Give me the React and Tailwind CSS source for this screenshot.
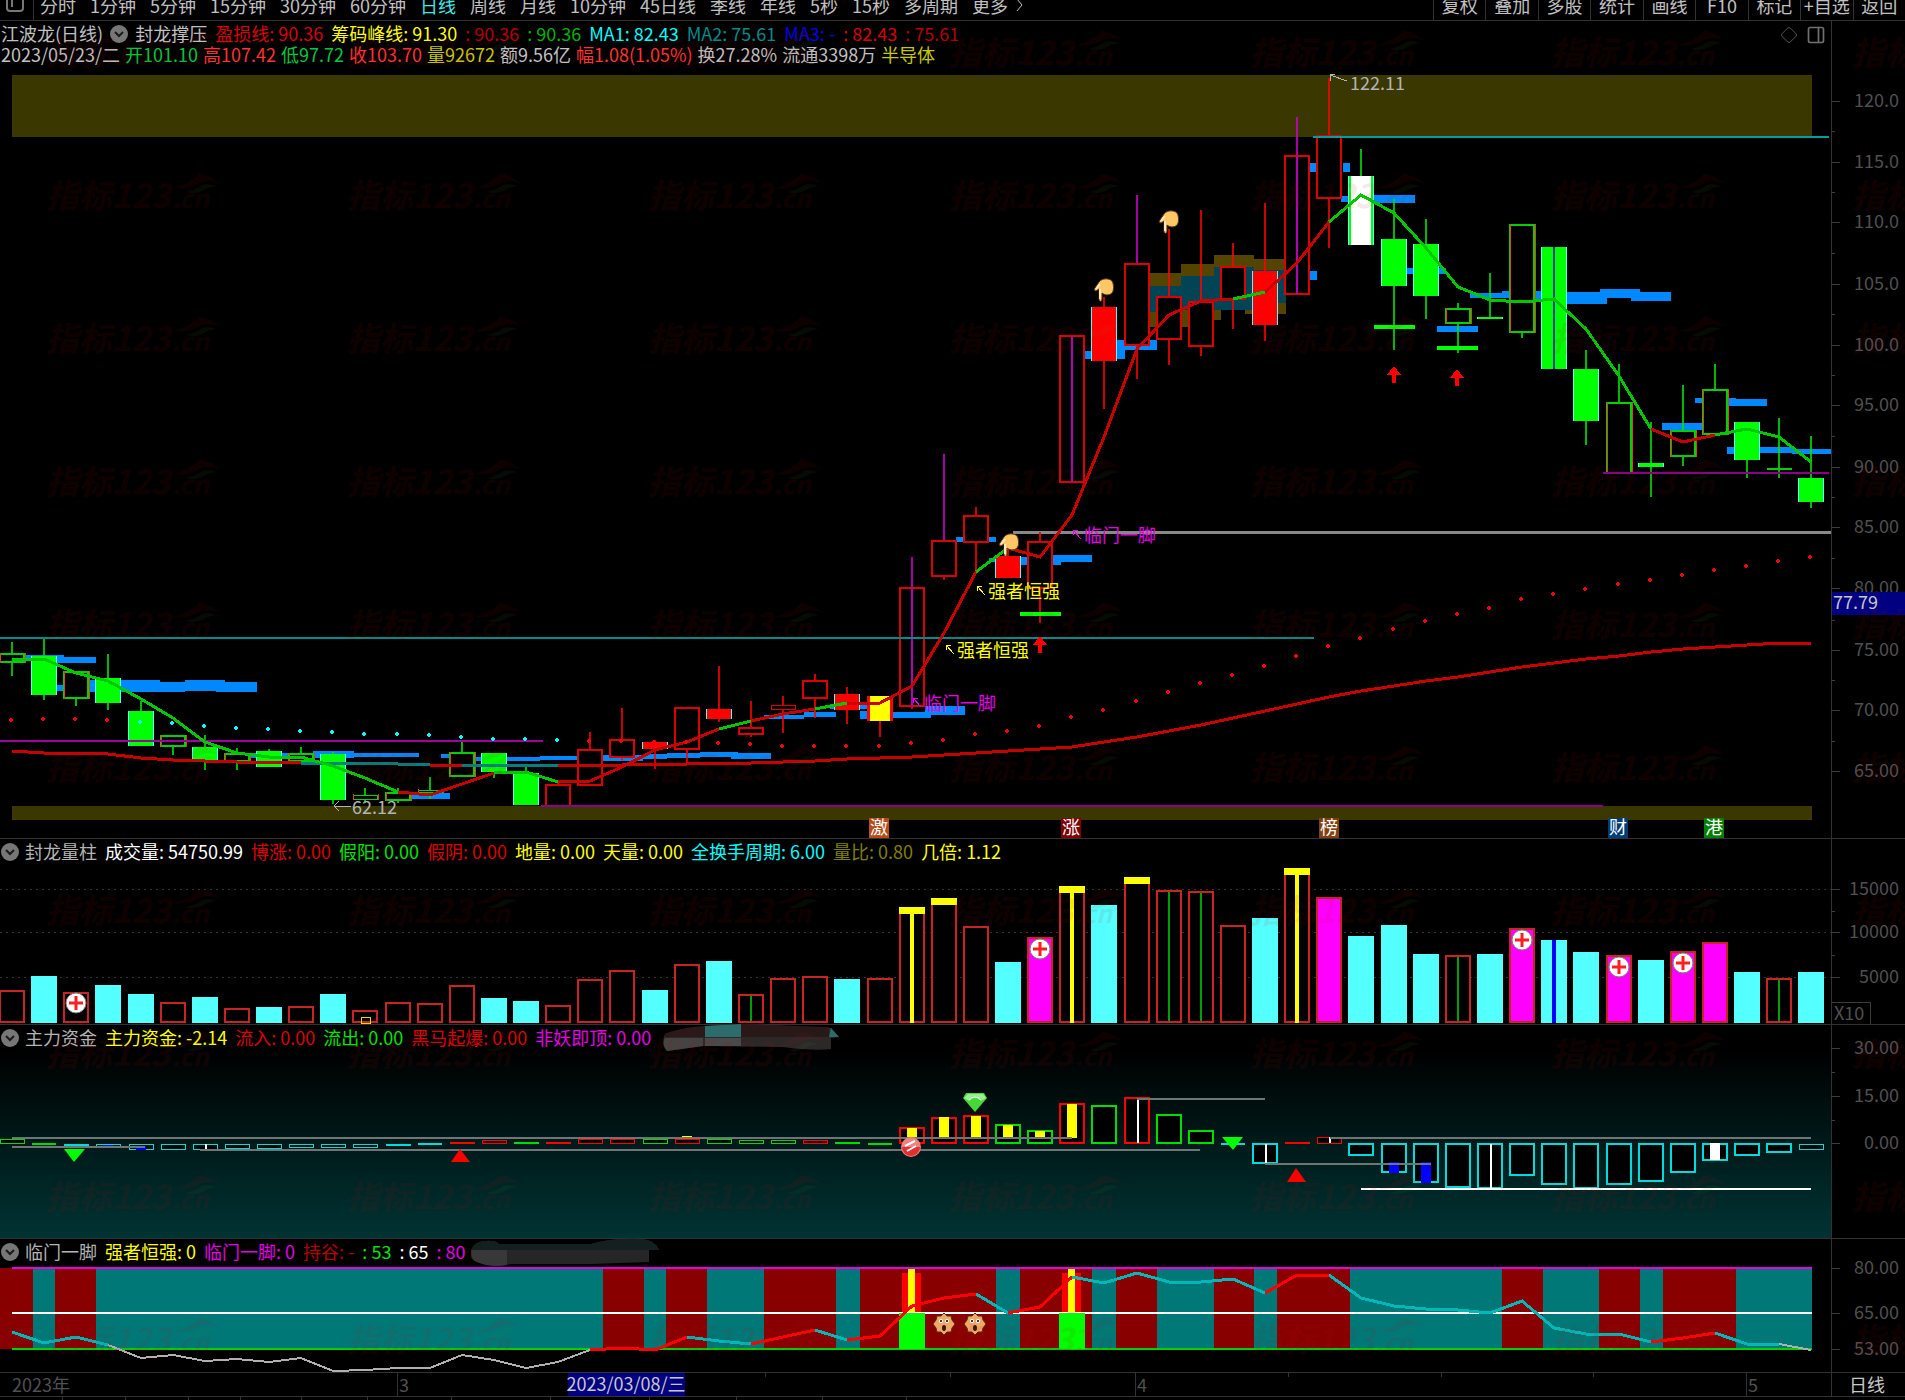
import { Diamond, PanelRight } from 'lucide-react';

// All charts share one coordinate space: 1905 wide, y measured from the top of the window.
const W = 1905;
const AXIS_X = 1831;
const cx = (i) => Math.round(12 + i * 32.13);

const periods = ['分时', '1分钟', '5分钟', '15分钟', '30分钟', '60分钟', '日线', '周线', '月线', '10分钟', '45日线', '季线', '年线', '5秒', '15秒', '多周期', '更多'];
const tools = ['复权', '叠加', '多股', '统计', '画线', 'F10', '标记', '+自选', '返回'];

// [high, body top, body bottom, low, kind]
const candles = [
  [642, 654, 662, 676, 'h'], [638, 656, 695, 700, 'G'], [672, 672, 698, 706, 'h'], [654, 678, 703, 710, 'G'],
  [701, 711, 746, 746, 'G'], [736, 736, 746, 755, 'h'], [735, 747, 761, 770, 'G'], [748, 754, 761, 770, 'h'],
  [749, 751, 767, 767, 'G'], [747, 754, 761, 761, 'h'], [752, 754, 800, 804, 'G'], [788, 795, 799, 803, 'h'],
  [788, 793, 800, 803, 'h'], [777, 790, 792, 799, 'h'], [742, 753, 776, 776, 'h'], [753, 753, 772, 778, 'G'],
  [767, 773, 805, 805, 'G'], [782, 785, 806, 806, 'r'], [732, 750, 785, 785, 'r'], [708, 740, 757, 760, 'r'],
  [740, 742, 749, 769, 'R'], [708, 708, 749, 763, 'r'], [666, 709, 719, 722, 'R'], [701, 728, 734, 737, 'r'],
  [696, 705, 709, 733, 'r'], [674, 681, 698, 718, 'r'], [687, 694, 710, 724, 'R'], [696, 696, 721, 737, 'Y'],
  [557, 588, 706, 709, 'm'], [454, 541, 576, 580, 'M'], [507, 516, 542, 572, 'r'], [548, 556, 578, 578, 'R'],
  [532, 542, 588, 623, 'r'], [336, 336, 482, 482, 'm'], [297, 307, 361, 409, 'R'], [195, 264, 345, 379, 'M'],
  [229, 297, 339, 365, 'r'], [210, 302, 346, 356, 'r'], [243, 267, 299, 329, 'r'], [203, 271, 325, 341, 'R'],
  [117, 156, 294, 294, 'm'], [78, 136, 198, 248, 'r'], [149, 176, 245, 245, 'W'], [199, 239, 286, 350, 'G'],
  [219, 244, 296, 319, 'G'], [303, 309, 323, 353, 'h'], [273, 317, 319, 319, 'G'], [225, 225, 332, 338, 'h'],
  [247, 247, 369, 369, 'B'], [350, 369, 421, 445, 'G'], [364, 403, 473, 473, 'h'], [422, 463, 467, 497, 'G'],
  [385, 431, 456, 466, 'h'], [364, 390, 434, 434, 'h'], [422, 422, 460, 478, 'G'], [418, 468, 468, 478, 'h'],
  [436, 478, 502, 508, 'G'],
];

// cost bands, [x1, y1, x2, y2]
const blueBands = [
  [25, 655, 64, 658], [32, 657, 96, 663], [57, 685, 64, 691], [88, 680, 160, 692], [160, 682, 185, 692], [185, 680, 225, 691],
  [216, 682, 257, 692], [248, 753, 285, 758], [285, 753, 313, 757], [313, 751, 354, 758], [354, 753, 419, 757], [408, 793, 450, 799],
  [441, 754, 450, 758], [474, 757, 540, 761], [540, 756, 578, 760], [603, 755, 643, 761], [643, 754, 667, 759],
  [667, 753, 700, 758], [700, 752, 738, 757], [731, 753, 771, 759], [764, 715, 804, 719], [804, 712, 836, 717],
  [830, 704, 870, 709], [860, 711, 868, 719], [893, 712, 931, 718], [925, 706, 965, 715], [956, 537, 964, 542],
  [988, 537, 996, 542], [989, 558, 997, 562], [1021, 557, 1028, 565], [1053, 555, 1092, 562], [1053, 562, 1061, 565],
  [1084, 351, 1092, 359], [1117, 340, 1125, 359], [1125, 345, 1157, 350], [1149, 340, 1157, 345], [1310, 163, 1317, 172],
  [1310, 271, 1317, 280], [1343, 163, 1350, 172], [1341, 196, 1351, 202], [1374, 195, 1415, 203], [1407, 268, 1415, 274],
  [1438, 268, 1446, 274], [1437, 326, 1478, 332], [1470, 293, 1502, 298], [1502, 291, 1510, 298], [1535, 291, 1543, 299],
  [1567, 292, 1607, 304], [1600, 289, 1640, 298], [1631, 292, 1671, 301], [1662, 423, 1703, 430], [1695, 398, 1703, 403],
  [1728, 398, 1736, 404], [1728, 399, 1767, 406], [1727, 447, 1735, 454], [1760, 447, 1792, 453], [1792, 449, 1831, 454],
];
const oliveZone = [[1149, 273, 1181, 327], [1181, 264, 1214, 327], [1214, 255, 1254, 267], [1214, 310, 1221, 320], [1245, 310, 1254, 314], [1254, 259, 1286, 314]];
const tealZone = [[1149, 286, 1181, 312], [1181, 276, 1214, 310], [1214, 267, 1254, 310], [1254, 270, 1286, 303]];

const maShort = [659, 659, 673, 681, 699, 718, 742, 753, 757, 757, 766, 778, 792, 795, 784, 773, 772, 782, 781, 767, 750, 742, 729, 721, 714, 709, 703, 703, 686, 633, 572, 548, 557, 515, 437, 349, 315, 301, 299, 292, 263, 222, 195, 213, 248, 287, 300, 302, 299, 329, 376, 429, 442, 435, 429, 437, 462];
const maShortRuns = [[0, 12, 'g'], [12, 15, 'r'], [15, 17, 'g'], [17, 22, 'r'], [22, 23, 'g'], [23, 25, 'r'], [25, 26, 'g'], [26, 30, 'r'], [30, 31, 'g'], [31, 38, 'r'], [38, 39, 'g'], [39, 41, 'r'], [41, 51, 'g'], [51, 53, 'r'], [53, 56, 'g']];
const maLong = [751, 753, 753, 754, 758, 760, 761, 762, 762, 763, 763, 763, 764, 765, 765, 765, 765, 765, 765, 765, 764, 764, 763, 763, 762, 761, 759, 758, 757, 755, 753, 751, 749, 747, 742, 737, 731, 725, 718, 711, 704, 697, 691, 686, 681, 677, 672, 667, 663, 659, 656, 652, 649, 647, 645, 643, 643];
const maLongRuns = [[0, 9, 'r'], [9, 13, 't'], [13, 14, 'r'], [14, 17, 't'], [17, 56, 'r']];
const dots = [720, 719, 719, 720, 722, 723, 726, 728, 729, 731, 732, 734, 734, 735, 737, 739, 739, 740, 741, 741, 742, 742, 743, 744, 746, 746, 746, 746, 743, 740, 734, 731, 726, 717, 710, 701, 692, 683, 675, 666, 656, 646, 638, 629, 621, 614, 608, 599, 594, 589, 584, 580, 575, 570, 566, 561, 557];

// r hollow red, c cyan, g hollow red with green line, y capped with centre line, k capped, m magenta, b cyan with blue line
const volume = [
  [990, 'r'], [976, 'c'], [992, 'r'], [985, 'c'], [994, 'c'], [1002, 'r'], [997, 'c'], [1008, 'r'], [1007, 'c'], [1006, 'r'],
  [994, 'c'], [1010, 'r'], [1002, 'r'], [1003, 'r'], [985, 'r'], [998, 'c'], [1001, 'c'], [1005, 'r'], [979, 'r'], [970, 'r'],
  [990, 'c'], [964, 'r'], [961, 'c'], [994, 'g'], [978, 'r'], [976, 'r'], [979, 'c'], [978, 'r'], [907, 'y'], [898, 'k'],
  [926, 'r'], [962, 'c'], [937, 'm'], [886, 'y'], [905, 'c'], [877, 'k'], [890, 'g'], [891, 'g'], [925, 'r'], [918, 'c'],
  [868, 'y'], [897, 'm'], [936, 'c'], [925, 'c'], [954, 'c'], [955, 'g'], [954, 'c'], [928, 'm'], [940, 'b'], [952, 'c'],
  [955, 'm'], [960, 'c'], [951, 'm'], [942, 'm'], [972, 'c'], [978, 'g'], [972, 'c'],
];
const crosses = [[2, 1003], [32, 949], [47, 940], [50, 967], [52, 963]];

// [top, bottom, colour, inner mark]
const flow = [
  [1139, 1143, 'g'], [1143, 1143, 'g'], [1144, 1145, 'c'], [1144, 1146, 'c', 'b', 1145, 1148], [1144, 1149, 'c', 'b', 1146, 1150], [1144, 1149, 'c'],
  [1144, 1149, 'c', 'w'], [1144, 1148, 'c'], [1144, 1148, 'c'], [1144, 1147, 'c'], [1144, 1147, 'c'], [1144, 1147, 'c'],
  [1144, 1145, 'c'], [1143, 1143, 'c'], [1142, 1143, 'r'], [1140, 1143, 'r'], [1142, 1143, 'g'], [1142, 1143, 'r'],
  [1139, 1143, 'r'], [1139, 1143, 'r'], [1139, 1143, 'g'], [1139, 1143, 'r', 'y', 1136, 1138], [1139, 1143, 'g'], [1140, 1143, 'g'],
  [1140, 1143, 'g'], [1140, 1143, 'r'], [1142, 1143, 'g'], [1143, 1143, 'g'], [1128, 1143, 'r', 'y', 1128, 1138],
  [1118, 1143, 'r', 'y', 1117, 1138], [1116, 1143, 'r', 'y', 1116, 1138], [1125, 1143, 'g', 'y', 1125, 1138],
  [1131, 1143, 'g', 'y', 1131, 1138], [1104, 1143, 'r', 'y', 1104, 1138], [1106, 1143, 'g'], [1098, 1143, 'r', 'w'],
  [1115, 1143, 'g'], [1131, 1143, 'g'], [1143, 1143, 'c'], [1144, 1163, 'c', 'w'], [1142, 1143, 'r'], [1137, 1143, 'r', 'w'],
  [1144, 1155, 'c'], [1144, 1172, 'c', 'b', 1162, 1173], [1144, 1182, 'c', 'b', 1162, 1183], [1144, 1187, 'c'],
  [1144, 1188, 'c', 'w'], [1144, 1175, 'c'], [1144, 1184, 'c'], [1144, 1188, 'c'], [1144, 1184, 'c'], [1144, 1181, 'c'],
  [1144, 1172, 'c'], [1144, 1160, 'c', 'W', 1143, 1160], [1144, 1155, 'c'], [1144, 1152, 'c'], [1144, 1149, 'c'],
];

const redZones = [[0, 33], [55, 96], [603, 644], [666, 707], [764, 836], [860, 996], [1020, 1092], [1116, 1157], [1214, 1254], [1277, 1350], [1502, 1543], [1599, 1640], [1663, 1736]];
const kick = [1332, 1343, 1337, 1345, 1358, 1355, 1361, 1359, 1362, 1358, 1371, 1370, 1368, 1368, 1355, 1360, 1368, 1362, 1350, 1348, 1350, 1337, 1341, 1344, 1337, 1330, 1340, 1336, 1306, 1298, 1294, 1313, 1307, 1277, 1283, 1273, 1282, 1282, 1279, 1293, 1275, 1275, 1298, 1306, 1309, 1310, 1313, 1301, 1328, 1334, 1334, 1342, 1338, 1333, 1344, 1344, 1350];
const kickRuns = [[0, 3, 'c'], [3, 18, 'w'], [18, 21, 'R'], [21, 23, 'c'], [23, 25, 'R'], [25, 26, 'c'], [26, 30, 'R'], [30, 31, 'c'], [31, 33, 'R'], [33, 39, 'c'], [39, 41, 'R'], [41, 51, 'c'], [51, 53, 'R'], [53, 55, 'c'], [55, 56, 'w']];

const runColor = { g: '#00c800', r: '#c80000', t: '#008080', c: '#00b8b8', w: '#b0b0b0', R: '#ff0000' };
const flowColor = { g: '#00dc00', r: '#ff0000', c: '#00dcdc' };

const Rects = ({ list, fill }) => list.map(([x1, y1, x2, y2], k) => <rect key={k} x={x1} y={y1} width={x2 - x1} height={y2 - y1} fill={fill} />);

const Runs = ({ values, runs }) => runs.map(([a, b, c]) => (
  <polyline key={a} fill="none" stroke={runColor[c]} strokeWidth={c === 'w' ? 2 : 3}
    points={values.slice(a, b + 1).map((y, k) => `${cx(a + k)},${y}`).join(' ')} />
));

const Candle = ({ i, data: [high, top, bottom, low, kind] }) => {
  const x = cx(i);
  const red = 'rRmMY'.includes(kind);
  const line = red ? '#ff0000' : '#00e600';
  const solid = { G: '#00ff00', B: '#00ff00', R: '#ff0000', Y: '#ffff00', W: '#ffffff' }[kind];
  const h = Math.max(bottom - top, 1);
  return (
    <g>
      <rect x={x - 1} y={high} width={2} height={top - high} fill={'mM'.includes(kind) ? '#d000d0' : line} opacity={0.8} />
      <rect x={x - 1} y={bottom} width={2} height={low - bottom} fill={line} opacity={0.8} />
      {solid ? (
        <>
          <rect x={x - 13} y={top} width={26} height={h} fill={kind === 'Y' ? '#ff0000' : '#54ffff'} />
          <rect x={kind === 'Y' ? x - 10 : x - 12} y={top} width={kind === 'Y' ? 20 : 24} height={h} fill={kind === 'W' ? '#00ff00' : solid} />
          {kind === 'W' && <rect x={x - 10} y={top} width={20} height={h} fill="#ffffff" />}
          {kind === 'B' && <rect x={x - 1} y={top} width={2} height={h} fill="#0040a0" />}
        </>
      ) : (
        <>
          <rect x={x - 12} y={top} width={24} height={h} fill="#000" stroke={red ? '#dc0000' : '#00d200'} strokeWidth={h > 4 ? 2 : 1} />
          {!red && h > 1 && <path d={`M${x - 12} ${top - 1}V${bottom + 1}M${x + 13} ${top - 1}V${bottom + 1}`} stroke="#e04020" />}
        </>
      )}
      {kind === 'm' && <rect x={x - 1} y={top} width={2} height={h} fill="#b400b4" />}
    </g>
  );
};

const Hand = ({ x, y }) => (
  <g transform={`translate(${x} ${y})`} shapeRendering="auto">
    <path d="M5 3C8-1 15-1 18 2C20 5 20 12 18 14C15 17 10 16 8 14V20C8 23 5 23 5 20V10L2 12C0 12 0 10 1 9Z" fill="#ffc864" stroke="#5a3418" strokeWidth={1} />
    <path d="M2 10L6 5M6 10V20" stroke="#ffe6c0" strokeWidth={2} fill="none" />
  </g>
);

const UpArrow = ({ x, y }) => <path d={`M${x} ${y}l7 9h-5v8h-4v-8h-5z`} fill="#ff0000" />;

const Note = ({ x, y, color, children }) => (
  <g>
    <path d={`M${x - 3} ${y + 4}l-8 -9m0 5v-5h5`} stroke={color} fill="none" strokeWidth={1} />
    <text x={x} y={y + 7} fill={color} fontSize={18}>{children}</text>
  </g>
);

const Tag = ({ x, fill, children }) => (
  <g>
    <rect x={x} y={818} width={20} height={20} fill={fill} />
    <text x={x + 10} y={834} fill="#fff" fontSize={18} textAnchor="middle">{children}</text>
  </g>
);

const Face = ({ x, y }) => (
  <g transform={`translate(${x} ${y})`} shapeRendering="auto">
    <path d="M0-11L3-8L7-8L8-4L11 0L8 4L7 8L3 8L0 11L-3 8L-7 8L-8 4L-11 0L-8-4L-7-8L-3-8Z" fill="#f0a868" stroke="#5a2c08" />
    <circle cx={-3} cy={-3} r={2} fill="#fff" /><circle cx={3} cy={-3} r={2} fill="#fff" />
    <circle cx={-3} cy={-3} r={1} fill="#000" /><circle cx={3} cy={-3} r={1} fill="#000" />
    <ellipse cx={0} cy={4} rx={2} ry={3} fill="#3c1400" />
  </g>
);

const Axis = ({ top, height, labels, minor = [] }) => (
  <g>
    <rect x={AXIS_X} y={top} width={1} height={height} fill="#323232" />
    {minor.map((y) => <rect key={y} x={AXIS_X} y={y} width={4} height={1} fill="#3c3c3c" />)}
    {labels.map(([y, label]) => (
      <g key={y}>
        <rect x={AXIS_X} y={y} width={9} height={1} fill="#3c3c3c" />
        <text x={1899} y={y + 6} textAnchor="end" fontSize={18} fill="#505050">{label}</text>
      </g>
    ))}
  </g>
);

const Chart = ({ top, height, label, children }) => (
  <svg className="block h-auto w-full overflow-visible" viewBox={`0 ${top} ${W} ${height}`} shapeRendering="crispEdges" role="img" aria-label={label}>
    {children}
  </svg>
);

const Toggle = ({ name }) => (
  <button type="button" aria-label={`${name} 菜单`} className="flex size-[18px] shrink-0 items-center justify-center rounded-full bg-[#777777]">
    <svg viewBox="0 0 18 18" className="size-[18px]"><path d="M5 7l4 4 4-4" fill="none" stroke="#1a1a1a" strokeWidth="2" /></svg>
  </button>
);

const PanelHeader = ({ name, items }) => (
  <div className="grid grid-cols-[1831fr_74fr]">
    <div className="flex h-[25px] items-center gap-2 pl-px">
      <div className="flex items-center gap-[6px] text-[#b4b4b4]"><Toggle name={name} /><h2>{name}</h2></div>
      {items.map(([text, color]) => <span key={text} className={color}>{text}</span>)}
    </div>
    <div className="border-l border-[#323232]" />
  </div>
);

const MainHeader = () => (
  <div className="grid grid-cols-[1831fr_74fr]">
    <div className="flex justify-between pt-[2px] pr-[5px] pb-px pl-px leading-[21px]">
      <div>
        <div className="flex items-center gap-2">
          <div className="flex items-center gap-[7px] text-[#c0c0c0]"><h1>江波龙(日线)</h1><Toggle name="封龙撑压" /><span>封龙撑压</span></div>
          <span className="text-[#dc0000]">盈损线: 90.36</span>
          <span className="text-[#ffff00]">筹码峰线: 91.30</span>
          <span className="text-[#b40000]">: 90.36</span>
          <span className="text-[#00b400]">: 90.36</span>
          <span className="text-[#00ffff]">MA1: 82.43</span>
          <span className="text-[#008c8c]">MA2: 75.61</span>
          <span className="text-[#0000e6]">MA3: -</span>
          <span className="text-[#dc0000]">: 82.43</span>
          <span className="text-[#b40000]">: 75.61</span>
        </div>
        <div className="flex gap-[5px]">
          <span className="text-[#c0c0c0]">2023/05/23/二</span>
          <span className="text-[#00c83c]">开101.10</span>
          <span className="text-[#ff3232]">高107.42</span>
          <span className="text-[#00c83c]">低97.72</span>
          <span className="text-[#ff3232]">收103.70</span>
          <span className="text-[#c8c800]">量92672</span>
          <span className="text-[#c0c0c0]">额9.56亿</span>
          <span className="text-[#ff3232]">幅1.08(1.05%)</span>
          <span className="text-[#c0c0c0]">换27.28%</span>
          <span className="text-[#c0c0c0]">流通3398万</span>
          <span className="text-[#c8c800]">半导体</span>
        </div>
      </div>
      <div className="flex h-6 items-center gap-2 text-[#707070]">
        <button type="button" aria-label="标记"><Diamond size={18} strokeWidth={1} /></button>
        <button type="button" aria-label="侧栏"><PanelRight size={20} strokeWidth={2} /></button>
      </div>
    </div>
    <div className="border-l border-[#323232]" />
  </div>
);

const PriceChart = () => (
  <Chart top={66} height={772} label="江波龙 日线">
    <rect x={12} y={75} width={1800} height={62} fill="#3a3800" />
    <rect x={12} y={806} width={1800} height={14} fill="#3a3800" />
    <Rects list={oliveZone} fill="#554400" />
    <Rects list={tealZone} fill="#004455" />
    <Rects list={blueBands} fill="#0088ff" />
    <rect x={1013} y={531} width={818} height={3} fill="#888888" />
    {candles.map((c, i) => <Candle key={i} i={i} data={c} />)}
    <rect x={0} y={637} width={1314} height={2} fill="#008c8c" />
    <rect x={1313} y={136} width={516} height={2} fill="#00a0a0" />
    <rect x={0} y={740} width={543} height={2} fill="#a000a0" />
    <rect x={541} y={805} width={1062} height={2} fill="#8c008c" />
    <rect x={1603} y={472} width={226} height={2} fill="#8c008c" />
    <Runs values={maLong} runs={maLongRuns} />
    <Runs values={maShort} runs={maShortRuns} />
    {dots.map((y, i) => <path key={i} d={`M${cx(i) - 3} ${y}h4M${cx(i) - 1} ${y - 2}v4`} stroke={i > 3 && i < 18 ? '#00ffff' : '#ff0000'} strokeWidth={2} />)}
    <rect x={1020} y={612} width={41} height={4} fill="#00ff00" />
    <rect x={1374} y={325} width={41} height={4} fill="#00ff00" />
    <rect x={1437} y={346} width={41} height={4} fill="#00ff00" />
    <UpArrow x={1040} y={636} />
    <UpArrow x={1394} y={366} />
    <UpArrow x={1457} y={369} />
    <Hand x={999} y={534} />
    <Hand x={1094} y={279} />
    <Hand x={1159} y={211} />
    <path d="M1347 81L1330 75M1330 81V74H1335" stroke="#b4b4b4" fill="none" />
    <text x={1350} y={90} fontSize={18} fill="#b4b4b4">122.11</text>
    <path d="M351 806H334M339 801L334 806L339 811" stroke="#b4b4b4" fill="none" />
    <text x={352} y={814} fontSize={18} fill="#b4b4b4">62.12</text>
    <Note x={988} y={591} color="#ffff00">强者恒强</Note>
    <Note x={957} y={650} color="#ffff00">强者恒强</Note>
    <Note x={924} y={703} color="#e600e6">临门一脚</Note>
    <Note x={1084} y={535} color="#e600e6">临门一脚</Note>
    <Tag x={869} fill="#b84c18">激</Tag>
    <Tag x={1061} fill="#800000">涨</Tag>
    <Tag x={1319} fill="#804010">榜</Tag>
    <Tag x={1608} fill="#003c78">财</Tag>
    <Tag x={1704} fill="#008000">港</Tag>
    <Axis top={66} height={772}
      minor={[131, 192, 253, 314, 375, 436, 497, 558, 620, 680, 741]}
      labels={[[101, '120.0'], [162, '115.0'], [222, '110.0'], [284, '105.0'], [345, '100.0'], [405, '95.00'], [467, '90.00'], [527, '85.00'], [588, '80.00'], [650, '75.00'], [710, '70.00'], [771, '65.00']]} />
    <rect x={1832} y={592} width={73} height={23} fill="#000080" />
    <text x={1833} y={609} fontSize={18} fill="#c8c8c8">77.79</text>
  </Chart>
);

const VolumeBar = ({ i, top, kind }) => {
  const x = cx(i);
  const bottom = 1023;
  if (kind === 'c' || kind === 'b') {
    return (
      <g>
        <rect x={x - 13} y={top} width={26} height={bottom - top} fill="#54ffff" />
        {kind === 'b' && <rect x={x - 2} y={top} width={4} height={bottom - top} fill="#0000ff" />}
      </g>
    );
  }
  return (
    <g>
      <rect x={x - 12} y={top + 1} width={24} height={bottom - top - 2} fill={kind === 'm' ? '#ff00ff' : '#000'} stroke="#c82424" strokeWidth={2} />
      {kind === 'g' && <rect x={x - 1} y={top + 2} width={2} height={bottom - top - 4} fill="#00a000" />}
      {(kind === 'y' || kind === 'k') && <rect x={x - 13} y={top} width={26} height={7} fill="#ffff00" />}
      {kind === 'y' && <rect x={x - 2} y={top} width={4} height={bottom - top} fill="#ffff00" />}
    </g>
  );
};

const VolumeChart = () => (
  <Chart top={864} height={160} label="封龙量柱">
    {[889, 932, 977].map((y) => <path key={y} d={`M0 ${y}H${AXIS_X}`} stroke="#323232" strokeDasharray="2 4" />)}
    {volume.map(([top, kind], i) => <VolumeBar key={i} i={i} top={top} kind={kind} />)}
    <rect x={361} y={1017} width={9} height={6} fill="none" stroke="#dcdc00" />
    {crosses.map(([i, y]) => (
      <g key={i} shapeRendering="auto">
        <circle cx={cx(i)} cy={y} r={10} fill="#ffffff" stroke="#808080" />
        <path d={`M${cx(i) - 7} ${y}h14M${cx(i)} ${y - 7}v14`} stroke="#ff1e1e" strokeWidth={3} />
      </g>
    ))}
    <Axis top={864} height={160} minor={[911, 955]} labels={[[889, '15000'], [932, '10000'], [977, '5000']]} />
    <path d="M1832 1002H1870V1024" fill="none" stroke="#3c3c3c" />
    <text x={1834} y={1020} fontSize={18} fill="#505050">X10</text>
  </Chart>
);

const FlowBar = ({ i, data: [top, bottom, color, mark, m1, m2] }) => {
  const x = cx(i);
  const h = bottom - top;
  const stroke = h > 6 ? 2 : h === 0 ? 0 : 1;
  return (
    <g>
      <rect x={x - 12} y={top} width={24} height={h || 2} fill={h < 2 ? flowColor[color] : '#000'} stroke={flowColor[color]} strokeWidth={stroke} />
      {mark === 'w' && <rect x={x} y={top} width={2} height={h} fill="#ffffff" />}
      {mark && mark !== 'w' && <rect x={x - 5} y={m1} width={10} height={m2 - m1} fill={{ y: '#ffff00', b: '#0000ff', W: '#ffffff' }[mark]} />}
    </g>
  );
};

const FlowChart = () => (
  <Chart top={1050} height={188} label="主力资金">
    <defs>
      <linearGradient id="flow-bg" x1="0" y1="0" x2="0" y2="1"><stop offset="0" stopColor="#000000" /><stop offset="1" stopColor="#003333" /></linearGradient>
    </defs>
    <rect x={0} y={1050} width={AXIS_X} height={188} fill="url(#flow-bg)" />
    {flow.map((f, i) => <FlowBar key={i} i={i} data={f} />)}
    <g fill="#707474">
      <rect x={12} y={1137} width={1060} height={2} />
      <rect x={12} y={1146} width={133} height={2} />
      <rect x={200} y={1149} width={1000} height={2} />
      <rect x={1137} y={1098} width={128} height={2} />
      <rect x={1265} y={1163} width={166} height={2} />
      <rect x={1330} y={1137} width={481} height={2} />
      <rect x={1361} y={1188} width={450} height={2} fill="#ffffff" />
    </g>
    <g shapeRendering="auto">
      <path d="M64 1149H85L74 1162Z" fill="#00ff00" />
      <path d="M1222 1137H1243L1233 1150Z" fill="#00ff00" />
      <path d="M451 1162H470L460 1149Z" fill="#ff0000" />
      <path d="M1287 1182H1306L1296 1168Z" fill="#ff0000" />
      <path d="M966 1093H984L987 1098L975 1112L963 1098Z" fill="#48d838" />
      <path d="M964 1098L968 1094H983L986 1098L981 1101Q975 1094 969 1101Z" fill="#98f090" />
      <path d="M969 1100Q975 1094 981 1100" fill="none" stroke="#e0ffe0" strokeWidth={1} />
      <circle cx={911} cy={1147} r={10} fill="#f08080" />
      <path d="M902 1147A9 9 0 0 0 920 1147Z" fill="#e03030" />
      <path d="M905 1146L915 1141M907 1151L916 1146" stroke="#ffffff" strokeWidth={2} />
    </g>
    <Axis top={1050} height={188} minor={[1072, 1120]} labels={[[1048, '30.00'], [1096, '15.00'], [1143, '0.00']]} />
  </Chart>
);

const KickChart = () => (
  <Chart top={1264} height={108} label="临门一脚">
    <rect x={0} y={1268} width={1812} height={81} fill="#007878" />
    {redZones.map(([a, b]) => <rect key={a} x={a} y={1268} width={b - a} height={81} fill="#880000" />)}
    {[28, 33].map((i) => (
      <g key={i}>
        <rect x={cx(i) - 10} y={1273} width={19} height={40} fill="#ff0000" />
        <rect x={cx(i) - 4} y={1268} width={7} height={45} fill="#ffff00" />
      </g>
    ))}
    <rect x={12} y={1267} width={1800} height={2} fill="#e600e6" />
    <rect x={12} y={1312} width={1800} height={2} fill="#ffffff" />
    <rect x={12} y={1348} width={1800} height={2} fill="#00d200" />
    {[28, 33].map((i) => <rect key={i} x={cx(i) - 13} y={1313} width={26} height={36} fill="#00ff00" />)}
    <Runs values={kick} runs={kickRuns} />
    <Face x={944} y={1324} />
    <Face x={975} y={1324} />
    <Axis top={1264} height={108} labels={[[1268, '80.00'], [1313, '65.00'], [1349, '53.00']]} />
  </Chart>
);

const TimeAxis = () => (
  <Chart top={1373} height={27} label="时间轴">
    <g fill="#323232">
      {[397, 1135, 1746, AXIS_X].map((x) => <rect key={x} x={x} y={1373} width={1} height={24} />)}
      {[765, 950, 1288, 1441, 1593].map((x) => <rect key={x} x={x} y={1373} width={1} height={4} />)}
      {[62, 125, 188, 240, 301, 367, 451, 550, 649, 736, 822, 906].map((x) => <rect key={x} x={x} y={1397} width={1} height={3} />)}
      <rect x={0} y={1396} width={W} height={1} />
    </g>
    <rect x={568} y={1373} width={117} height={23} fill="#000080" />
    <g fontSize={18} fill="#505050">
      <text x={12} y={1392}>2023年</text>
      <text x={399} y={1392}>3</text>
      <text x={626} y={1391} fill="#c8c8c8" textAnchor="middle">2023/03/08/三</text>
      <text x={1137} y={1392}>4</text>
      <text x={1748} y={1392}>5</text>
      <text x={1849} y={1392} fill="#c8c8c8">日线</text>
    </g>
  </Chart>
);

const Watermarks = () => (
  <svg className="pointer-events-none absolute inset-0 size-full" aria-hidden="true">
    <defs>
      <pattern id="mark" x="30" y="20" width="301" height="143" patternUnits="userSpaceOnUse">
        <g fill="#b41010" fillOpacity="0.09" fontStyle="italic" fontWeight="700">
          <text x="16" y="45" fontSize="33">指标123</text>
          <text x="142" y="45" fontSize="25">.cn</text>
          <path d="M144 25Q162 20 169 11Q176 11 190 20Q178 16 169 20Q158 27 144 25Z" />
          <path d="M156 29Q166 27 172 22Q178 20 186 23Q178 24 174 27Q166 32 156 29Z" fill="#50781e" />
        </g>
      </pattern>
    </defs>
    <rect width="100%" height="100%" fill="url(#mark)" />
  </svg>
);

export default function App() {
  return (
    <main className="relative w-full overflow-hidden bg-black font-['Noto_Sans_CJK_SC',sans-serif] text-[18px] leading-[21px] whitespace-nowrap text-[#c0c0c0]">
      <nav className="flex h-[21px] items-end justify-between overflow-hidden border-b border-[#323232]">
        <div className="flex items-end">
          <div className="mr-[6px] flex h-5 w-[34px] items-start border-r border-[#323232] pl-[6px]">
            <svg viewBox="0 0 18 12" className="h-3 w-[18px]"><path d="M1 0V8Q1 11 4 11H14Q17 11 17 8V0M6 0V7" fill="none" stroke="#777777" strokeWidth="2" /></svg>
          </div>
          <div className="flex items-end gap-[14px] pb-[6px] leading-[18px]">
            {periods.map((p) => <button key={p} type="button" className={p === '日线' ? 'text-[#40e8e8]' : 'text-[#c0c0c0]'}>{p}</button>)}
          </div>
          <svg viewBox="0 0 8 14" className="mb-2 ml-2 h-[14px] w-2"><path d="M1 1L6 7L1 13" fill="none" stroke="#c0c0c0" /></svg>
        </div>
        <div className="grid w-[472px] grid-cols-9">
          {tools.map((t) => <button key={t} type="button" className="flex h-5 items-end justify-center border-l border-[#323232] pb-[6px] leading-[18px]">{t}</button>)}
        </div>
      </nav>

      <section>
        <MainHeader />
        <PriceChart />
      </section>

      <section className="border-t border-[#323232]">
        <PanelHeader name="封龙量柱" items={[
          ['成交量: 54750.99', 'text-[#ffffff]'], ['博涨: 0.00', 'text-[#dc0000]'], ['假阳: 0.00', 'text-[#00e600]'], ['假阴: 0.00', 'text-[#dc0000]'],
          ['地量: 0.00', 'text-[#ffff00]'], ['天量: 0.00', 'text-[#ffff00]'], ['全换手周期: 6.00', 'text-[#00ffff]'], ['量比: 0.80', 'text-[#808000]'], ['几倍: 1.12', 'text-[#ffff00]'],
        ]} />
        <VolumeChart />
      </section>

      <section className="relative border-t border-[#323232]">
        <PanelHeader name="主力资金" items={[
          ['主力资金: -2.14', 'text-[#ffff00]'], ['流入: 0.00', 'text-[#dc0000]'], ['流出: 0.00', 'text-[#00e600]'], ['黑马起爆: 0.00', 'text-[#dc0000]'], ['非妖即顶: 0.00', 'text-[#e600e6]'],
        ]} />
        <FlowChart />
        <svg viewBox="0 0 176 28" className="absolute -top-px left-[663px] h-7 w-[176px]" aria-hidden="true">
          <path d="M2 10Q20 2 80 0L168 4L176 13L168 14V25Q150 27 120 23L40 22L4 27Q-2 18 2 10Z" fill="#2c2828" />
          <path d="M2 10Q20 2 60 1L72 0V13H2Z" fill="#2c1818" />
          <path d="M42 2L78 0V13H42ZM168 4L176 13H166Z" fill="#2c6c6c" />
          <path d="M2 14H40V22L4 27Q-2 20 2 14Z" fill="#444444" />
          <path d="M42 14H78V22H42Z" fill="#4a4a4a" />
          <path d="M78 0L166 3V13H78Z" fill="#281818" />
        </svg>
      </section>

      <section className="relative border-t border-[#323232]">
        <PanelHeader name="临门一脚" items={[
          ['强者恒强: 0', 'text-[#ffff00]'], ['临门一脚: 0', 'text-[#e600e6]'], ['持谷: -', 'text-[#b40000]'], [': 53', 'text-[#00e600]'], [': 65', 'text-[#ffffff]'], [': 80', 'text-[#e600e6]'],
        ]} />
        <KickChart />
        <svg viewBox="0 0 188 30" className="absolute -top-px left-[471px] h-[30px] w-[188px]" aria-hidden="true">
          <path d="M0 18Q0 4 14 3Q24 2 28 6H120Q140 0 170 1Q184 2 188 12H178V24L120 26H40Q20 30 6 24Q0 22 0 18Z" fill="#262626" />
          <path d="M0 12Q2 4 14 3Q24 2 28 6H120Q140 0 170 1Q184 2 188 12Z" fill="#142020" />
          <path d="M0 12H36V27Q20 30 6 24Q0 22 0 12Z" fill="#383838" />
        </svg>
      </section>

      <footer className="border-t border-[#323232]">
        <TimeAxis />
      </footer>
      <Watermarks />
    </main>
  );
}
